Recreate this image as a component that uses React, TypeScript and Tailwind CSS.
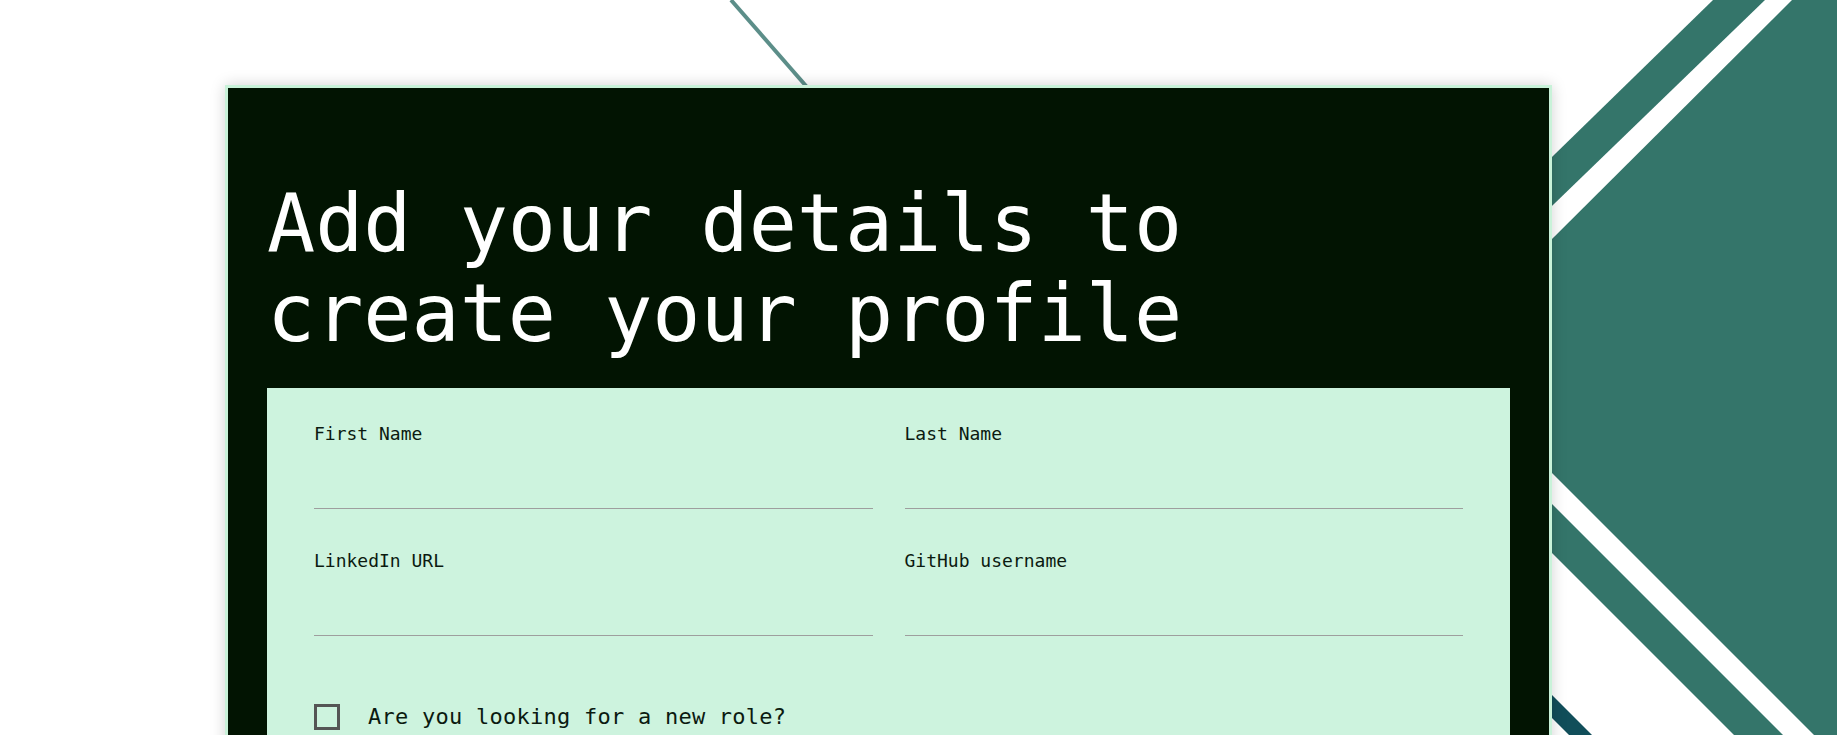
export default function App() {
  const fields = [
    { id: 'firstName', label: 'First Name' },
    { id: 'lastName', label: 'Last Name' },
    { id: 'linkedin', label: 'LinkedIn URL' },
    { id: 'github', label: 'GitHub username' }
  ];

  return (
    <div className="relative h-screen w-full overflow-hidden bg-white font-['DejaVu_Sans_Mono',monospace]">
      {/* background decoration */}
      <svg className="absolute inset-0" width="1837" height="735" viewBox="0 0 1837 735" aria-hidden="true">
        <line x1="731" y1="0" x2="820" y2="102" stroke="#5c8e89" strokeWidth="4" />
        <polygon points="1713,0 1765,0 1400,353 1400,305" fill="#34756a" />
        <polygon points="1792,0 1837,0 1837,735 1814,735 1548,469 1548,243" fill="#34756a" />
        <polygon points="1540,492 1783,735 1734,735 1540,541" fill="#34756a" />
        <polygon points="1540,683 1592,735 1569,735 1540,706" fill="#114e5a" />
      </svg>

      <div className="relative pl-[225px] pt-[85px]">
        <div className="w-[1327px] border-[3px] border-[#c9f2d9] bg-[#021402] px-[39px] pt-[91px] pb-10 shadow-[0_0_14px_rgba(0,0,0,0.18)]">
          <h1 className="max-w-[960px] text-[80px] leading-[90px] font-normal text-white">
            Add your details to create your profile
          </h1>

          <form className="mt-[29px] bg-[#cdf3de] px-[47px] pt-[32px] pb-16">
            <div className="grid grid-cols-2 gap-x-[32px] gap-y-[38px]">
              {fields.map((field) => (
                <div key={field.id} className="flex flex-col">
                  <label htmlFor={field.id} className="text-[18px] leading-[27px] text-[#0b1a10]">
                    {field.label}
                  </label>
                  <input
                    id={field.id}
                    type="text"
                    className="h-[62px] border-b border-[#9e9e9e] bg-transparent text-[18px] text-[#0b1a10] outline-none"
                  />
                </div>
              ))}
            </div>

            <label className="mt-[64px] flex items-center gap-[28px]">
              <span className="h-[26px] w-[26px] shrink-0 border-[3px] border-[#555555]" />
              <span className="text-[22px] leading-[33px] tracking-[0.25px] text-[#0b1a10]">
                Are you looking for a new role?
              </span>
            </label>

            <div className="mt-10 h-[60px]" />
          </form>
        </div>
      </div>
    </div>
  );
}
